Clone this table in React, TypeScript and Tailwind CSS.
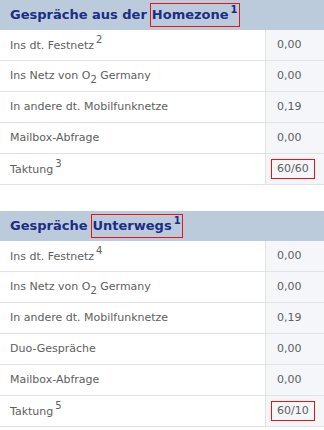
import React from "react"

type Row = { label: React.ReactNode; value: string; boxed?: boolean }

const Sup = ({ n }: { n: string }) => (
  <sup className="relative -top-[1px] ml-[2px] align-super text-[10px] leading-none">{n}</sup>
)

const O2 = () => (
  <>
    O<sub className="relative top-[1px] align-sub text-[10px] leading-none">2</sub>
  </>
)

const homezone: Row[] = [
  { label: <>Ins dt. Festnetz<Sup n="2" /></>, value: "0,00" },
  { label: <>Ins Netz von <O2 /> Germany</>, value: "0,00" },
  { label: "In andere dt. Mobilfunknetze", value: "0,19" },
  { label: "Mailbox-Abfrage", value: "0,00" },
  { label: <>Taktung<Sup n="3" /></>, value: "60/60", boxed: true },
]

const unterwegs: Row[] = [
  { label: <>Ins dt. Festnetz<Sup n="4" /></>, value: "0,00" },
  { label: <>Ins Netz von <O2 /> Germany</>, value: "0,00" },
  { label: "In andere dt. Mobilfunknetze", value: "0,19" },
  { label: "Duo-Gespräche", value: "0,00" },
  { label: "Mailbox-Abfrage", value: "0,00" },
  { label: <>Taktung<Sup n="5" /></>, value: "60/10", boxed: true },
]

function Section({ title, highlight, rows }: { title: string; highlight: string; rows: Row[] }) {
  return (
    <div>
      <div className="flex h-[30px] items-center bg-[#bccbdb] pl-[10px] text-[13px] font-bold text-[#1b2d86]">
        <span>{title}</span>
        <span className="ml-[3px] border border-[#e8140f] px-[1px] py-[1px]">
          {highlight}
          <Sup n="1" />
        </span>
      </div>
      {rows.map((r, i) => (
        <div key={i} className="flex h-[31px] border-b border-[#e2e2e2]">
          <div className="flex flex-1 items-center pl-[10px] text-[11px] text-[#5e5e5e]">
            <span>{r.label}</span>
          </div>
          <div className="flex w-[59px] items-center border-l border-[#e2e2e2] bg-[#f4f6f9] pl-[5px] text-[11px] text-[#5e5e5e]">
            {r.boxed ? (
              <span className="border border-[#e8140f] px-[5px] py-[1px]">{r.value}</span>
            ) : (
              <span className="pl-[6px]">{r.value}</span>
            )}
          </div>
        </div>
      ))}
    </div>
  )
}

export default function App() {
  return (
    <div className="h-[430px] w-[324px] overflow-hidden bg-white font-['DejaVu_Sans',Verdana,sans-serif]">
      <Section title="Gespräche aus der" highlight="Homezone" rows={homezone} />
      <div className="h-[26px]" />
      <Section title="Gespräche" highlight="Unterwegs" rows={unterwegs} />
    </div>
  )
}
